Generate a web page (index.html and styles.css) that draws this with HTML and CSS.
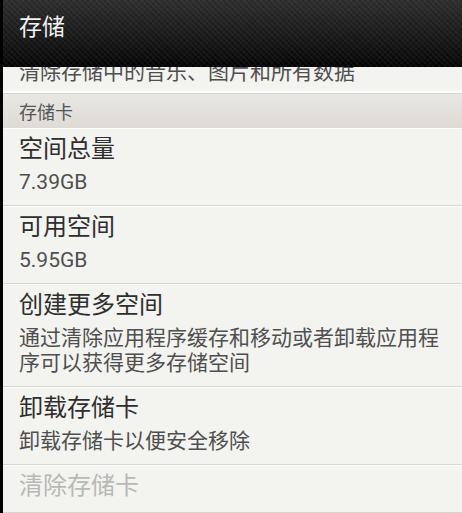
FILE: index.html
```html
<!DOCTYPE html>
<html lang="zh-CN">
<head>
<meta charset="utf-8">
<title>存储</title>
<link rel="stylesheet" href="styles.css">
</head>
<body>
<div class="screen">
  <header class="action-bar">
    <h1 class="action-title">存储</h1>
  </header>
  <div class="viewport">
    <div class="item item-partial">
      <div class="summary partial-summary">清除存储中的音乐、图片和所有数据</div>
    </div>
    <div class="section">存储卡</div>
    <div class="item">
      <div class="title">空间总量</div>
      <div class="summary">7.39GB</div>
    </div>
    <div class="item">
      <div class="title">可用空间</div>
      <div class="summary">5.95GB</div>
    </div>
    <div class="item">
      <div class="title">创建更多空间</div>
      <div class="summary">通过清除应用程序缓存和移动或者卸载应用程序可以获得更多存储空间</div>
    </div>
    <div class="item">
      <div class="title">卸载存储卡</div>
      <div class="summary">卸载存储卡以便安全移除</div>
    </div>
    <div class="item item-disabled">
      <div class="title">清除存储卡</div>
    </div>
  </div>
</div>
</body>
</html>
```
FILE: styles.css
```css
html, body {
  margin: 0;
  padding: 0;
  background: #000;
  height: 100%;
  overflow: hidden;
}

.screen {
  margin-left: 3px;
  height: 513px;
  display: flex;
  flex-direction: column;
  font-family: Roboto, "Noto Sans CJK SC", sans-serif;
  background: #f3f3ef;
}

.action-bar {
  height: 67px;
  flex: none;
  box-sizing: border-box;
  padding: 15px 0 0 16px;
  background:
    repeating-linear-gradient(45deg, rgba(255,255,255,0.035) 0 2px, rgba(0,0,0,0) 2px 4px),
    repeating-linear-gradient(-45deg, rgba(255,255,255,0.02) 0 2px, rgba(0,0,0,0) 2px 4px),
    linear-gradient(#2b2b2b 0%, #1a1a1a 45%, #0a0a0a 85%, #000 100%);
}

.action-title {
  margin: 0;
  font-size: 23px;
  line-height: 26px;
  font-weight: normal;
  color: #f2f2f2;
}

.viewport {
  flex: 1;
  overflow: hidden;
}

.item {
  padding: 4px 10px 10px 16px;
  border-top: 1px solid #fdfdfb;
  border-bottom: 1px solid #d6d5d1;
  background: #f3f3ef;
}

.item-partial {
  height: 26px;
  padding-top: 0;
  padding-bottom: 0;
  border-top: none;
  border-bottom: 1px solid #d4d3cf;
  box-shadow: inset 0 -2px 0 #fbfbf9;
  overflow: hidden;
}

.title {
  font-size: 24px;
  line-height: 32px;
  color: #2e2e2e;
}

.summary {
  margin-top: 5px;
  font-size: 21px;
  line-height: 25px;
  color: #4f4f4f;
}

.item-partial .summary {
  margin-top: -7px;
}

.item-disabled .title {
  color: #b8b8b6;
}

.section {
  height: 34px;
  box-sizing: border-box;
  padding: 3px 0 0 16px;
  font-size: 18px;
  line-height: 31px;
  color: #555;
  background: linear-gradient(#e9e7e3, #dedbd6);
}
```
